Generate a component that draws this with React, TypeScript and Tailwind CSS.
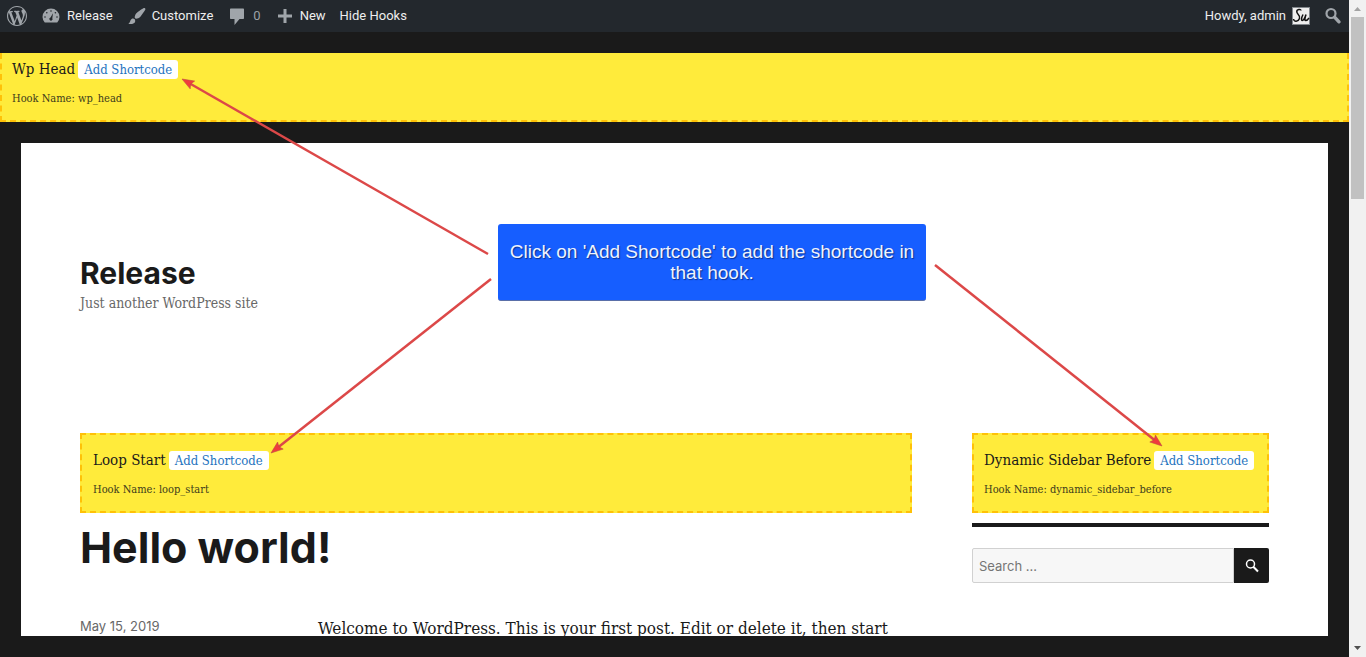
import React from "react";

const serif = "font-['DejaVu_Serif_Condensed','DejaVu_Serif',serif]";

function Icon({ d, className = "size-5" }: { d: string; className?: string }) {
  return (
    <svg viewBox="0 0 20 20" className={`${className} shrink-0 fill-[#a0a5aa]`} fillRule="evenodd" aria-hidden="true">
      <path d={d} />
    </svg>
  );
}

const wordpress =
  "M20 10c0-5.51-4.49-10-10-10C4.48 0 0 4.49 0 10c0 5.52 4.48 10 10 10 5.51 0 10-4.48 10-10zM7.78 15.37L4.37 6.22c.55-.02 1.17-.08 1.17-.08.5-.06.44-1.13-.06-1.11 0 0-1.45.11-2.37.11-.18 0-.37 0-.58-.01C4.12 2.69 6.87 1.11 10 1.11c2.33 0 4.45.87 6.05 2.34-.68-.11-1.65.39-1.65 1.58 0 .74.45 1.36.9 2.1.35.61.55 1.36.55 2.46 0 1.49-1.4 5-1.4 5l-3.03-8.37c.54-.02.82-.17.82-.17.5-.05.44-1.25-.06-1.22 0 0-1.44.12-2.38.12-.87 0-2.33-.12-2.33-.12-.5-.03-.56 1.2-.06 1.22l.92.08 1.26 3.41zM17.41 10c.24-.64.74-1.87.43-4.25.7 1.29 1.05 2.71 1.05 4.25 0 3.29-1.73 6.24-4.4 7.78.97-2.59 1.94-5.2 2.92-7.78zM6.1 18.09C3.12 16.65 1.11 13.53 1.11 10c0-1.3.23-2.48.72-3.59C3.25 10.3 4.67 14.2 6.1 18.09zm4.03-6.63l2.58 6.98c-.86.29-1.76.45-2.71.45-.79 0-1.57-.11-2.29-.33.81-2.38 1.62-4.74 2.42-7.1z";
const dashboard =
  "M3.76 16.5h12.48A8.5 8.5 0 0 0 18.5 11A8.5 8.5 0 0 0 1.5 11A8.5 8.5 0 0 0 3.76 16.5zM9.2 5a.8.8 0 1 1 1.6 0a.8.8 0 1 1-1.6 0zM5 6.8a.8.8 0 1 1 1.6 0a.8.8 0 1 1-1.6 0zM13.6 6.8a.8.8 0 1 1 1.6 0a.8.8 0 1 1-1.6 0zM3.2 11a.8.8 0 1 1 1.6 0a.8.8 0 1 1-1.6 0zM15.2 11a.8.8 0 1 1 1.6 0a.8.8 0 1 1-1.6 0zM12 7.2L11.3 12.2A1.6 1.6 0 1 1 9.5 11.5z";
const brush =
  "M18.33 3.57s.27-.8-.31-1.36c-.53-.52-1.22-.24-1.22-.24-.61.3-5.76 3.47-7.67 5.57-.86.96-2.06 3.79-1.09 4.82.92.98 3.96-.17 4.79-1 2.06-2.06 5.21-7.17 5.5-7.79zM1.4 17.65c2.37-1.56 1.46-3.41 3.23-4.64.93-.65 2.22-.62 3.08.29.63.67.8 2.57-.16 3.46-1.57 1.45-4 1.55-6.15.89z";
const comment = "M4 2.5h12c.6 0 1 .4 1 1V12c0 .6-.4 1-1 1h-3.500L7.500 19v-6H4c-.6 0-1-.4-1-1V3.500c0-.6.4-1 1-1z";
const plus = "M17 8.500v3h-5.500V17h-3v-5.500H3v-3h5.500V3h3v5.500z";

function AdminBar() {
  return (
    <nav aria-label="Toolbar" className="flex h-8 shrink-0 items-center justify-between bg-[#23282d] pl-[7px] pr-[6px] font-[Roboto,sans-serif] text-[13px] text-[#eeeeee]">
      <div className="flex items-center gap-[14px]">
        <a href="#about" aria-label="About WordPress"><Icon d={wordpress} /></a>
        <a href="#site" className="flex items-center gap-[6px]"><Icon d={dashboard} />Release</a>
        <a href="#customize" className="flex items-center gap-[5px]"><Icon d={brush} />Customize</a>
        <a href="#comments" className="flex items-center gap-[6px] text-[#9ca1a6]"><Icon d={comment} />0</a>
        <a href="#new" className="flex items-center gap-[5px]"><Icon d={plus} />New</a>
        <a href="#hooks">Hide Hooks</a>
      </div>
      <div className="flex items-center">
        <a href="#profile" className="mr-[13px] flex items-center gap-[6px]">
          Howdy, admin
          <svg viewBox="0 0 18 18" className="size-[18px]" aria-hidden="true">
            <rect width="18" height="18" fill="#82878c" />
            <rect x="1" y="1" width="16" height="16" fill="#eeeeee" />
            <path d="M9 3.500C9 1.800 4.500 2 4.800 5C5 7.500 8.800 8 7.500 11.500S2 15 1.500 12M11 7.500C9.500 10.500 9 13.500 10.300 13.500S13 10.500 14 7.500C13 10.500 12.300 13.500 13.600 13.500S16 12.500 17 11" fill="none" stroke="#111" strokeWidth="1.500" />
          </svg>
        </a>
        <button aria-label="Search" className="flex">
          <svg viewBox="0 0 20 20" className="size-5" fill="none" stroke="#a0a5aa" aria-hidden="true">
            <circle cx="8" cy="7.500" r="4.500" strokeWidth="2.200" />
            <path d="M11.800 11.300L16 15.800" strokeWidth="3.400" strokeLinecap="round" />
          </svg>
        </button>
      </div>
    </nav>
  );
}

function Hook({ title, name, className }: { title: string; name: string; className: string }) {
  return (
    <section className={`border-2 border-dashed border-[#ffc107] bg-[#ffeb3b] text-[#1a1a1a] ${serif} ${className}`}>
      <div className="flex items-center gap-[3px] text-[15px] leading-5">
        <h3 className="whitespace-nowrap">{title}</h3>
        <button className="h-[19px] w-[100px] shrink-0 whitespace-nowrap rounded-[3px] bg-white text-[13px] leading-[19px] text-[#1e73be]">Add Shortcode</button>
      </div>
      <p className="mt-3 text-[11px] leading-4 text-[#403c1c]">Hook Name: {name}</p>
    </section>
  );
}

function Arrow({ x1, y1, x2, y2 }: { x1: number; y1: number; x2: number; y2: number }) {
  const angle = (Math.atan2(y2 - y1, x2 - x1) * 180) / Math.PI;
  const length = Math.hypot(x2 - x1, y2 - y1);
  return (
    <g transform={`translate(${x2} ${y2}) rotate(${angle})`}>
      <path d={`M${-length} 0H-8`} stroke="#dc4848" strokeWidth="2.500" />
      <path d="M0 0L-12 -4.500L-10 0L-12 4.500z" fill="#f03c3c" stroke="#b84a42" strokeWidth=".5" />
    </g>
  );
}

function Scrollbar() {
  return (
    <div aria-hidden="true" className="flex w-[17px] shrink-0 flex-col items-center bg-[#f1f1f1]">
      <svg viewBox="0 0 17 17" className="size-[17px]"><path d="M5 11L8.500 7L12 11z" fill="#a3a3a3" /></svg>
      <div className="h-[182px] w-[13px] bg-[#c1c1c1]" />
      <svg viewBox="0 0 17 17" className="mt-auto size-[17px]"><path d="M5 6L8.500 10L12 6z" fill="#505050" /></svg>
    </div>
  );
}

export default function App() {
  return (
    <div className="relative flex h-screen overflow-hidden bg-[#1a1a1a]">
      <div className="flex min-w-0 flex-1 flex-col">
        <AdminBar />
        <Hook title="Wp Head" name="wp_head" className="mt-[21px] shrink-0 border-t-0 px-[10px] pb-[13px] pt-[6px]" />
        <main className="m-[21px] min-h-0 flex-1 overflow-hidden bg-white px-[59px] text-[#1a1a1a]">
          <header className="h-[290px] pt-[112px]">
            <h1 className="font-[Inter,sans-serif] text-[30px] font-bold leading-9">Release</h1>
            <p className={`mt-0.5 text-sm leading-5 text-[#686868] ${serif}`}>Just another WordPress site</p>
          </header>
          <div className="flex gap-[60px]">
            <article className="min-w-0 flex-1">
              <Hook title="Loop Start" name="loop_start" className="h-20 px-[11px] pt-[15px]" />
              <h2 className="mt-[10px] font-[Inter,sans-serif] text-[43px] font-bold leading-[48px]">Hello world!</h2>
              <div className="mt-[43px] flex">
                <time className="w-[238px] shrink-0 pt-0.5 font-[Inter,sans-serif] text-[13px] leading-5 text-[#686868]">May 15, 2019</time>
                <p className={`whitespace-nowrap text-[17px] leading-7 ${serif}`}>Welcome to WordPress. This is your first post. Edit or delete it, then start</p>
              </div>
            </article>
            <aside className="w-[297px] shrink-0">
              <Hook title="Dynamic Sidebar Before" name="dynamic_sidebar_before" className="h-20 px-[10px] pt-[15px]" />
              <form className="mt-[10px] flex border-t-4 border-[#1a1a1a] pt-[21px]" onSubmit={(e) => e.preventDefault()}>
                <input type="search" aria-label="Search" placeholder="Search ..." className="h-[35px] min-w-0 flex-1 rounded-l-[2px] border border-[#d1d1d1] bg-[#f7f7f7] px-[6px] font-[Inter,sans-serif] text-[13px] placeholder:text-[#757575]" />
                <button aria-label="Submit search" className="flex h-[35px] w-[35px] items-center justify-center rounded-r-[2px] bg-[#1a1a1a]">
                  <svg viewBox="0 0 14 14" className="size-[14px]" fill="none" stroke="white" strokeWidth="1.500"><circle cx="5.500" cy="5" r="4" /><path d="M8.300 7.800L13 12.500" strokeWidth="2" /></svg>
                </button>
              </form>
            </aside>
          </div>
        </main>
      </div>
      <Scrollbar />
      <svg viewBox="0 0 1366 657" className="pointer-events-none absolute left-0 top-0 h-[657px] w-[1366px] max-w-none" aria-hidden="true">
        <Arrow x1={488} y1={254} x2={182} y2={79} />
        <Arrow x1={491} y1={279} x2={271} y2={453} />
        <Arrow x1={935} y1={265} x2={1162} y2={446} />
      </svg>
      <div role="note" className="absolute left-[498px] top-[224px] flex h-[77px] w-[428px] items-center justify-center rounded-[3px] border-b border-[#5a6fa8] bg-[#165eff] px-2 text-center font-['Liberation_Sans',sans-serif] text-[19px] leading-[21px] text-[#eef3ff] [text-shadow:1px_1px_1px_#0b3391]">
        Click on 'Add Shortcode' to add the shortcode in that hook.
      </div>
    </div>
  );
}
